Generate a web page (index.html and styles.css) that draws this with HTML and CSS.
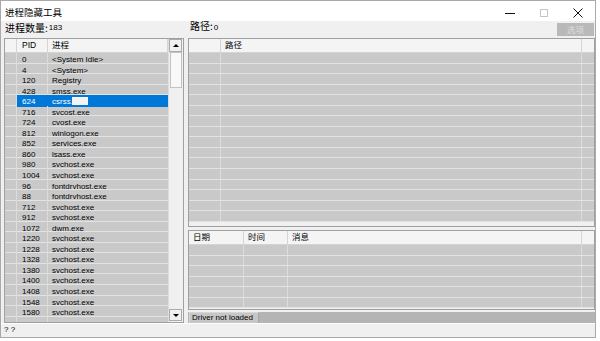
FILE: index.html
```html
<!DOCTYPE html>
<html lang="zh-CN">
<head>
<meta charset="utf-8">
<title>进程隐藏工具</title>
<link rel="stylesheet" href="styles.css">
</head>
<body>
<div class="window">
  <div class="titlebar">
    <span class="title">进程隐藏工具</span>
    <div class="controls">
      <span class="ctl"><svg width="10" height="10" viewBox="0 0 10 10"><line x1="0" y1="5.5" x2="10" y2="5.5" stroke="#111" stroke-width="1"/></svg></span>
      <span class="ctl"><svg width="10" height="10" viewBox="0 0 10 10"><rect x="1.5" y="1.5" width="7" height="7" fill="none" stroke="#c4c4c4" stroke-width="1"/></svg></span>
      <span class="ctl"><svg width="10" height="10" viewBox="0 0 10 10"><path d="M0.5 0.5 L9.5 9.5 M9.5 0.5 L0.5 9.5" stroke="#111" stroke-width="1" fill="none"/></svg></span>
    </div>
  </div>
  <div class="client">
    <div class="panes">
      <div class="pane left">
        <div class="label">进程数量:<span class="num">183</span></div>
        <div class="list plist">
          <div class="cols">
            <div class="hdr g-proc"><span></span><span>PID</span><span>进程</span></div>
            <div class="rows">
              <div class="row g-proc"><span></span><span>0</span><span>&lt;System Idle&gt;</span></div>
              <div class="row g-proc"><span></span><span>4</span><span>&lt;System&gt;</span></div>
              <div class="row g-proc"><span></span><span>120</span><span>Registry</span></div>
              <div class="row g-proc"><span></span><span>428</span><span>smss.exe</span></div>
              <div class="row g-proc sel"><span></span><span>624</span><span>csrss.exe</span></div>
              <div class="row g-proc"><span></span><span>716</span><span>svcost.exe</span></div>
              <div class="row g-proc"><span></span><span>724</span><span>cvost.exe</span></div>
              <div class="row g-proc"><span></span><span>812</span><span>winlogon.exe</span></div>
              <div class="row g-proc"><span></span><span>852</span><span>services.exe</span></div>
              <div class="row g-proc"><span></span><span>860</span><span>lsass.exe</span></div>
              <div class="row g-proc"><span></span><span>980</span><span>svchost.exe</span></div>
              <div class="row g-proc"><span></span><span>1004</span><span>svchost.exe</span></div>
              <div class="row g-proc"><span></span><span>96</span><span>fontdrvhost.exe</span></div>
              <div class="row g-proc"><span></span><span>88</span><span>fontdrvhost.exe</span></div>
              <div class="row g-proc"><span></span><span>712</span><span>svchost.exe</span></div>
              <div class="row g-proc"><span></span><span>912</span><span>svchost.exe</span></div>
              <div class="row g-proc"><span></span><span>1072</span><span>dwm.exe</span></div>
              <div class="row g-proc"><span></span><span>1220</span><span>svchost.exe</span></div>
              <div class="row g-proc"><span></span><span>1228</span><span>svchost.exe</span></div>
              <div class="row g-proc"><span></span><span>1328</span><span>svchost.exe</span></div>
              <div class="row g-proc"><span></span><span>1380</span><span>svchost.exe</span></div>
              <div class="row g-proc"><span></span><span>1400</span><span>svchost.exe</span></div>
              <div class="row g-proc"><span></span><span>1408</span><span>svchost.exe</span></div>
              <div class="row g-proc"><span></span><span>1548</span><span>svchost.exe</span></div>
              <div class="row g-proc"><span></span><span>1580</span><span>svchost.exe</span></div>
              <div class="row g-proc"><span></span><span></span><span></span></div>
            </div>
          </div>
          <div class="vscroll">
            <div class="sbtn"><span class="tri up"></span></div>
            <div class="thumb"></div>
            <div class="track"></div>
            <div class="sbtn down"><span class="tri dn"></span></div>
          </div>
          <span class="blot"></span>
        </div>
      </div>
      <div class="pane right">
        <div class="label rlabel">
          <span>路径:<span class="num">0</span></span>
          <span class="btn">选项</span>
        </div>
        <div class="list tlist">
          <div class="hdr g-path"><span></span><span>路径</span><span></span></div>
          <div class="rows">
            <div class="row g-path"><span></span><span></span><span></span></div>
            <div class="row g-path"><span></span><span></span><span></span></div>
            <div class="row g-path"><span></span><span></span><span></span></div>
            <div class="row g-path"><span></span><span></span><span></span></div>
            <div class="row g-path"><span></span><span></span><span></span></div>
            <div class="row g-path"><span></span><span></span><span></span></div>
            <div class="row g-path"><span></span><span></span><span></span></div>
            <div class="row g-path"><span></span><span></span><span></span></div>
            <div class="row g-path"><span></span><span></span><span></span></div>
            <div class="row g-path"><span></span><span></span><span></span></div>
            <div class="row g-path"><span></span><span></span><span></span></div>
            <div class="row g-path"><span></span><span></span><span></span></div>
            <div class="row g-path"><span></span><span></span><span></span></div>
            <div class="row g-path"><span></span><span></span><span></span></div>
            <div class="row g-path"><span></span><span></span><span></span></div>
            <div class="row g-path"><span></span><span></span><span></span></div>
          </div>
        </div>
        <div class="list blist">
          <div class="hdr g-log"><span>日期</span><span>时间</span><span>消息</span><span></span></div>
          <div class="rows">
            <div class="row g-log"><span></span><span></span><span></span><span></span></div>
            <div class="row g-log"><span></span><span></span><span></span><span></span></div>
            <div class="row g-log"><span></span><span></span><span></span><span></span></div>
            <div class="row g-log"><span></span><span></span><span></span><span></span></div>
            <div class="row g-log"><span></span><span></span><span></span><span></span></div>
            <div class="row g-log"><span></span><span></span><span></span><span></span></div>
          </div>
        </div>
        <div class="status">
          <span class="scell">Driver not loaded</span>
        </div>
      </div>
    </div>
    <div class="footer">? ?</div>
  </div>
</div>
</body>
</html>
```
FILE: styles.css
```css
* {
  box-sizing: border-box;
  margin: 0;
  padding: 0;
}

body {
  margin: 0;
  background: #ffffff;
  font-family: "Liberation Sans", "Noto Sans CJK SC", sans-serif;
  color: #000;
}

.window {
  width: 596px;
  height: 338px;
  border: 1px solid #a9a9a9;
  display: flex;
  flex-direction: column;
  background: #ffffff;
}

.titlebar {
  height: 20px;
  flex: none;
  display: flex;
  align-items: center;
  justify-content: space-between;
  background: #ffffff;
}

.title {
  font-family: "Noto Sans CJK SC", sans-serif;
  font-size: 9.5px;
  line-height: 12px;
  padding-left: 4px;
  padding-top: 2px;
}

.controls {
  display: flex;
  height: 100%;
}

.ctl {
  width: 34px;
  display: flex;
  align-items: center;
  justify-content: center;
  padding-top: 3px;
}

.ctl svg {
  display: block;
}

.client {
  flex: 1;
  background: #f0f0f0;
  display: flex;
  flex-direction: column;
}

.panes {
  display: flex;
  gap: 4px;
  padding-left: 3px;
  height: 302px;
  flex: none;
}

.pane {
  display: flex;
  flex-direction: column;
}

.left {
  width: 180px;
}

.right {
  width: 407px;
}

.label {
  height: 17px;
  flex: none;
  display: flex;
  align-items: center;
  font-family: "Noto Sans CJK SC", sans-serif;
  font-size: 10px;
  line-height: 12px;
  padding-left: 1px;
}

.rlabel {
  justify-content: space-between;
  padding-left: 2px;
  padding-right: 1px;
  align-items: flex-end;
  padding-bottom: 2px;
}

.rlabel > span:first-child {
  padding-bottom: 2px;
}

.left .label {
  align-items: flex-end;
  padding-bottom: 4px;
}

.num {
  font-family: "Liberation Sans", sans-serif;
  font-size: 8px;
  margin-left: 1px;
}

.btn {
  width: 37px;
  height: 13px;
  background: #b9b9b9;
  color: #dedede;
  font-size: 8.5px;
  line-height: 13px;
  text-align: center;
  font-family: "Noto Sans CJK SC", sans-serif;
}

.list {
  border: 1px solid #a0a0a0;
  background: #f0f0f0;
  position: relative;
  overflow: hidden;
  flex: none;
}

.plist {
  height: 285px;
  display: flex;
}

.cols {
  flex: 1;
  min-width: 0;
  display: flex;
  flex-direction: column;
}

.hdr {
  height: 14px;
  flex: none;
  display: grid;
  background: #f4f4f4;
  border-bottom: 1px solid #d4d4d4;
  font-size: 8.5px;
  line-height: 13px;
}

.hdr > span {
  border-right: 1px solid #d4d4d4;
  padding-left: 4px;
  white-space: nowrap;
}

.hdr > span:last-child {
  border-right: none;
}

.rows {
  flex: 1;
  overflow: hidden;
}

.row {
  height: 10.55px;
  display: grid;
  background: #c9c9c9;
  border-bottom: 1px solid #e3e3e3;
  font-size: 8px;
  line-height: 10px;
}

.row > span {
  border-right: 1px solid #dcdcdc;
  padding: 2px 0 0 4px;
  white-space: nowrap;
}

.row > span:last-child {
  border-right: none;
}

.g-proc {
  grid-template-columns: 12px 31px 1fr;
}

.g-proc > span:nth-child(2) {
  padding-left: 5px;
}

.hdr.g-proc > span:last-child {
  border-right: 1px solid #d4d4d4;
}

.row.sel > span:nth-child(n+2) {
  background: #0078d7;
  color: #ffffff;
  border-right-color: #0078d7;
}

.blot {
  position: absolute;
  left: 67px;
  top: 58px;
  width: 16px;
  height: 8px;
  background: #f4f4f4;
}

.vscroll {
  width: 15px;
  flex: none;
  display: flex;
  flex-direction: column;
  background: #f0f0f0;
  border-left: 1px solid #dedede;
  padding: 0 1px 1px 0;
}

.sbtn {
  height: 13px;
  flex: none;
  border: 1px solid #acacac;
  background: #f0f0f0;
  display: flex;
  align-items: center;
  justify-content: center;
}

.sbtn.down {
  height: 12px;
}

.tri {
  width: 0;
  height: 0;
  border-left: 3px solid transparent;
  border-right: 3px solid transparent;
}

.tri.up {
  border-bottom: 3px solid #000;
}

.tri.dn {
  border-top: 3px solid #000;
}

.thumb {
  height: 36px;
  flex: none;
  margin-left: 1px;
  border: 1px solid #c2c2c2;
  background: #f8f8f8;
}

.track {
  flex: 1;
}

.tlist {
  height: 189px;
  display: flex;
  flex-direction: column;
}

.g-path {
  grid-template-columns: 32px 361px 1fr;
}

.blist {
  height: 80px;
  margin-top: 3px;
  display: flex;
  flex-direction: column;
}

.g-log {
  grid-template-columns: 55px 44px 294px 1fr;
}

.status {
  height: 11px;
  margin-top: 2px;
  flex: none;
  display: flex;
  background: #b4b4b4;
}

.scell {
  width: 70px;
  margin-left: 1px;
  background: #c6c6c6;
  border-top: 1px solid #d6d6d6;
  border-left: 1px solid #d6d6d6;
  border-right: 1px solid #a6a6a6;
  font-size: 8px;
  line-height: 10px;
  padding-left: 2px;
  white-space: nowrap;
}

.footer {
  flex: 1;
  border-top: 1px solid #ffffff;
  font-size: 8px;
  line-height: 12px;
  padding-left: 3px;
}
```
